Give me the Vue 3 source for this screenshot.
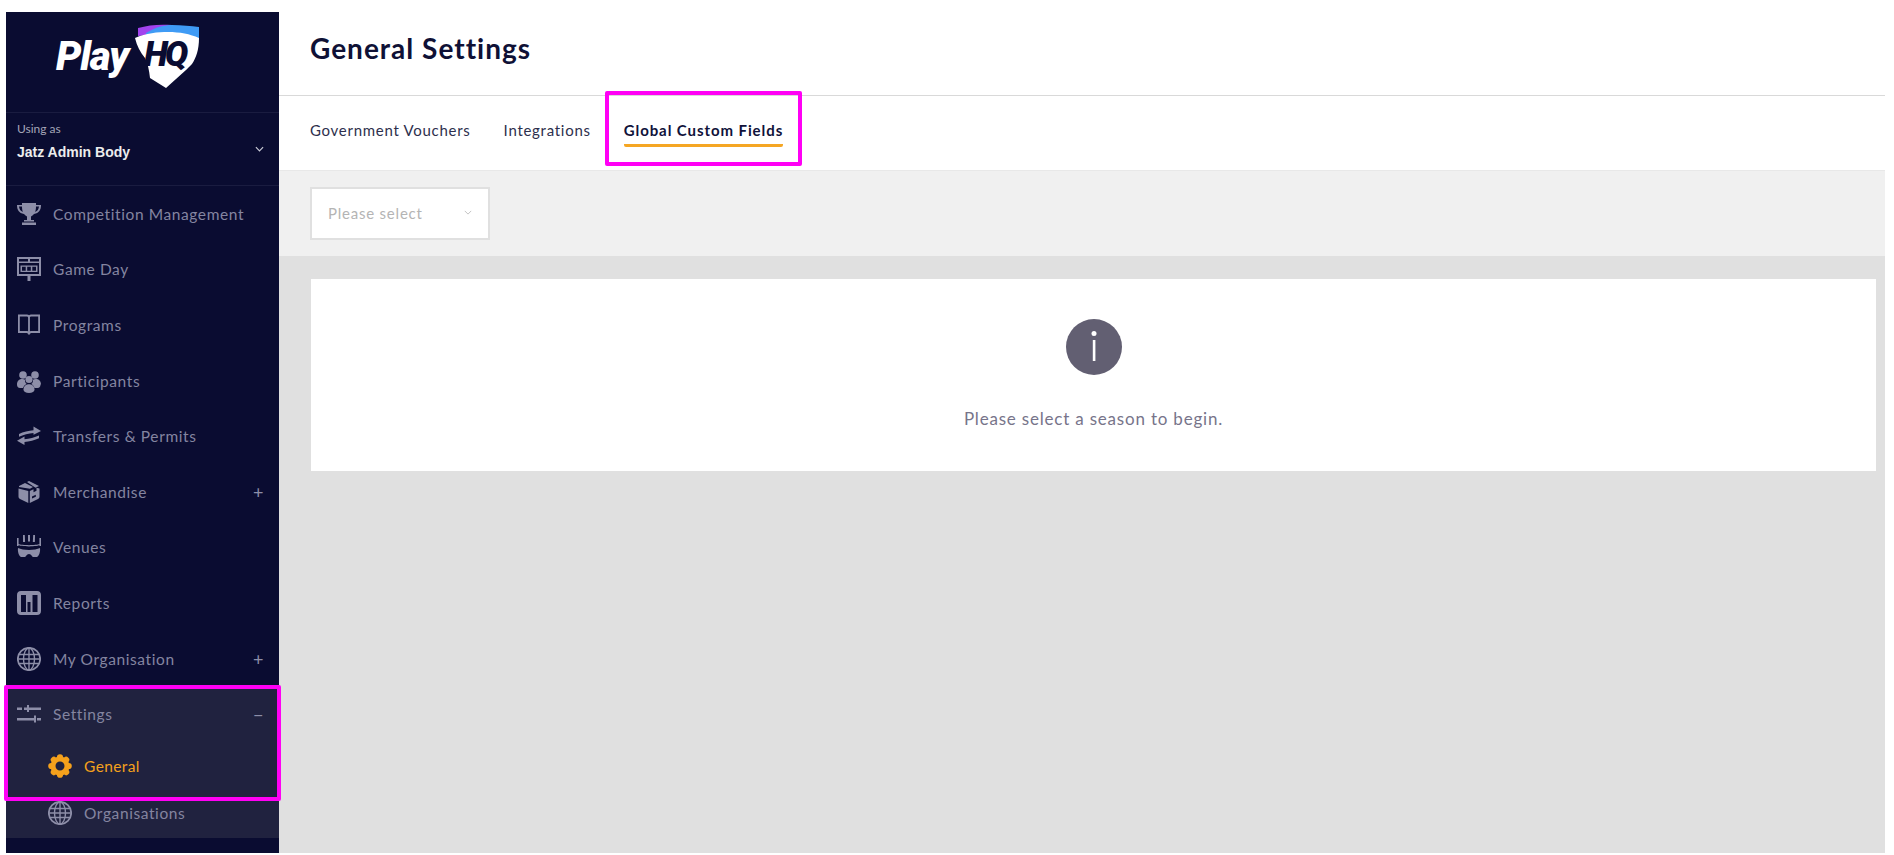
<script setup>
const items = [
  { label: 'Competition Management', icon: 'trophy' },
  { label: 'Game Day', icon: 'board' },
  { label: 'Programs', icon: 'book' },
  { label: 'Participants', icon: 'people' },
  { label: 'Transfers & Permits', icon: 'arrows' },
  { label: 'Merchandise', icon: 'box', mark: '+' },
  { label: 'Venues', icon: 'venue' },
  { label: 'Reports', icon: 'report' },
  { label: 'My Organisation', icon: 'globe', mark: '+' },
]
const tabs = [
  { label: 'Government Vouchers' },
  { label: 'Integrations' },
  { label: 'Global Custom Fields', active: true },
]
const teeth = [0, 45, 90, 135, 180, 225, 270, 315]
</script>

<template>
  <div class="page">
    <aside class="sidebar">
      <div class="logo">
        <span class="play">Play</span>
        <span class="shield">
          <svg class="shield-svg" viewBox="0 0 66 66" width="66" height="66">
            <path d="M4 4 C14 1 26 0 38 1 L38 9 L4 12 Z" fill="#a243ee" />
            <path d="M12 9 C22 3 30 1 38 1 C48 1 57 2 65 3 L65 16 C50 9 28 8 12 12 Z" fill="#3f9bf5" />
            <path d="M1 14 C12 9 24 8 34 8 C46 8 56 10 65 14 C65 26 62 34 58 40 L52 46 L32 64 L16 54 C15 46 14 40 11 34 C6 28 3 22 1 14 Z" fill="#fff" />
          </svg>
          <span class="hq">HQ</span>
        </span>
      </div>

      <div class="user">
        <div>
          <div class="using">Using as</div>
          <div class="org">Jatz Admin Body</div>
        </div>
        <svg class="chev" viewBox="0 0 10 6" width="9" height="6"><path d="M1 1l4 4 4-4" fill="none" stroke="#c9cad6" stroke-width="1.3" /></svg>
      </div>

      <nav class="nav">
        <a v-for="it in items" :key="it.label" class="row">
          <svg class="ic" viewBox="0 0 24 24" width="24" height="24" fill="#8d8ea8">
            <template v-if="it.icon === 'trophy'">
              <path d="M5 1h14v2h5c0 5-2 8-7 9-1 1-2 2-3 2.500V18h3v1.500H7V18h3v-3.500C9 14 8 13 7 12 2 11 0 8 0 3h5zM2 4.500c.3 2.700 1.500 4.500 3.800 5.500C5.300 8.500 5 6.500 5 4.500zm17 0c0 2-.3 4-.8 5.500 2.300-1 3.500-2.800 3.800-5.500z" />
              <rect x="5" y="20.500" width="14" height="2.500" />
            </template>
            <template v-else-if="it.icon === 'board'">
              <path fill-rule="evenodd" d="M0 0h24v19H0zM2 2v2.500h9V2zm11 0v2.500h9V2zM2 6v11h20V6z" />
              <path fill-rule="evenodd" d="M3.500 8.500h17v6.500h-17zm1.500 1.300v3.900h3.700V9.800zm5.200 0v3.900h3.600V9.800zm5.100 0v3.900H19V9.800z" />
              <rect x="10.500" y="19" width="3" height="5" />
            </template>
            <template v-else-if="it.icon === 'book'">
              <path fill="none" stroke="#8d8ea8" stroke-width="1.800" d="M1.900 2.500h8c1.400 0 2.100.8 2.100 2.200 0-1.400.7-2.200 2.100-2.200h8v16.500h-8c-1.400 0-2.100.6-2.100 2.500 0-1.900-.7-2.500-2.100-2.500h-8zM12 4.700V21.500" />
            </template>
            <template v-else-if="it.icon === 'people'">
              <circle cx="6" cy="6" r="3.800" /><circle cx="18" cy="6" r="3.800" />
              <path d="M0 15.500c0-3.500 2-5.500 5.500-5.500 1 0 1.800.2 2.500.7-.2 2 .5 3.500 1.800 4.300C7.500 16 6.500 17.500 6 19H3c-2 0-3-1.500-3-3.500zM24 15.500c0-3.500-2-5.500-5.500-5.500-1 0-1.800.2-2.500.7.2 2-.5 3.500-1.800 4.300 1.800 1 2.800 2.500 3.300 4h3c2 0 3-1.500 3-3.500z" />
              <circle cx="12" cy="10.500" r="3.600" />
              <path d="M6.500 20.500c0-3.200 2.200-5.300 5.500-5.300s5.500 2.100 5.500 5.300c0 2-2.200 3.500-5.500 3.500s-5.500-1.500-5.500-3.500z" />
            </template>
            <template v-else-if="it.icon === 'arrows'">
              <path d="M2 10 C6 8 12 6.800 16.500 6.300 V2.500 L24 7 L16.500 10.800 V9 C12 9.400 6 10.800 2 12.800Z" />
              <path d="M22 11.500 C18 13.500 12 14.800 7.500 15.300 V12.500 L0 16.800 L7.500 21 V18 C12 17.500 18 16.200 22 14.200Z" />
            </template>
            <template v-else-if="it.icon === 'box'">
              <path d="M2 6 8 3l8 4-3 1.700L2 7zM10 2l2-1 10 5-3.500 1.800zM1.500 8.500l9.800 2.500V23L3 19c-1-.5-1.500-1.200-1.500-2.500zM22.500 8.500v8c0 1.300-.5 2-1.500 2.500l-8.200 4V11l3.700-1.800v3l3-1.500v-3z" />
              <path d="M15 16.500l3.800-1.800v2L15 18.500z" fill="#0a0c31" />
            </template>
            <template v-else-if="it.icon === 'venue'">
              <path d="M0 3h1.600v8H0zM22.400 3H24v8h-1.600zM6 0h1.800l.3 7H6zM11 0h2v6.500h-2zM16.200 0H18l-.1 7h-2.100z" />
              <path d="M1.500 9c3 1.500 18 1.500 21 0l1 .5C21 12 3 12 .5 9.500z" />
              <path d="M1 13c5 2.500 17 2.500 22 0 .5 4-1 8-3 9h-4c-1 0-1.500-3-4-3s-3 3-4 3H4c-2-1-3.500-5-3-9z" />
            </template>
            <template v-else-if="it.icon === 'report'">
              <path fill-rule="evenodd" d="M4 0h16c2.500 0 4 1.500 4 4v16c0 2.500-1.500 4-4 4H4c-2.500 0-4-1.500-4-4V4c0-2.500 1.500-4 4-4zm0 4v17h5V4zm6.500 7v10h3V11zm5 -7v17h5V4z" />
            </template>
            <template v-else-if="it.icon === 'globe'">
              <g fill="none" stroke="#8d8ea8" stroke-width="1.400">
                <circle cx="12" cy="12" r="11.200" stroke-width="1.700" />
                <ellipse cx="12" cy="12" rx="5.500" ry="11" />
                <path d="M12 1v22M2 7.500h20M1 12h22M2 16.500h20" />
              </g>
            </template>
          </svg>
          <span class="label">{{ it.label }}</span>
          <span v-if="it.mark" class="mark">{{ it.mark }}</span>
        </a>

        <div class="group">
          <a class="row">
            <svg class="ic" viewBox="0 0 24 24" width="24" height="24" fill="#8d8ea8">
              <rect x="0" y="5.500" width="5" height="2.500" /><rect x="7" y="5.500" width="17" height="2.500" /><rect x="10" y="3" width="2" height="7" />
              <rect x="0" y="16" width="17" height="2.500" /><rect x="20" y="16" width="4" height="2.500" /><rect x="17" y="13.500" width="2" height="7" />
            </svg>
            <span class="label">Settings</span>
            <span class="mark">−</span>
          </a>
          <a class="sub active">
            <svg class="ic" viewBox="0 0 24 24" width="24" height="24" fill="#f5a11c">
              <circle v-for="a in teeth" :key="a" cx="12" cy="3.300" r="3.100" :transform="`rotate(${a} 12 12)`" />
              <circle cx="12" cy="12" r="7" fill="none" stroke="#f5a11c" stroke-width="5" />
            </svg>
            <span class="label">General</span>
          </a>
          <a class="sub">
            <svg class="ic" viewBox="0 0 24 24" width="24" height="24">
              <g fill="none" stroke="#8d8ea8" stroke-width="1.400">
                <circle cx="12" cy="12" r="11.200" stroke-width="1.700" />
                <ellipse cx="12" cy="12" rx="5.500" ry="11" />
                <path d="M12 1v22M2 7.500h20M1 12h22M2 16.500h20" />
              </g>
            </svg>
            <span class="label">Organisations</span>
          </a>
        </div>
      </nav>
      <div class="hl hl-side"></div>
    </aside>

    <main class="main">
      <header class="head"><h1>General Settings</h1></header>
      <div class="tabs">
        <a v-for="t in tabs" :key="t.label" class="tab" :class="{ on: t.active }">{{ t.label }}</a>
        <div class="hl hl-tab"></div>
      </div>
      <div class="toolbar">
        <div class="select">
          <span>Please select</span>
          <svg viewBox="0 0 10 6" width="8" height="5"><path d="M1 1l4 4 4-4" fill="none" stroke="#b5b5b5" stroke-width="1" /></svg>
        </div>
      </div>
      <div class="body">
        <section class="card">
          <svg viewBox="0 0 56 56" width="56" height="56">
            <circle cx="28" cy="28" r="28" fill="#625f72" />
            <circle cx="28" cy="14.500" r="2.500" fill="#fff" />
            <rect x="26.800" y="21" width="2.600" height="21" fill="#fff" />
          </svg>
          <p>Please select a season to begin.</p>
        </section>
      </div>
    </main>
  </div>
</template>

<style scoped>
.page {
  box-sizing: border-box;
  height: 855px;
  padding: 12px 9px 2px 6px;
  display: flex;
  background: #fff;
  font-family: Lato, "Open Sans", sans-serif;
  overflow: hidden;
}
.sidebar {
  position: relative;
  width: 273px;
  flex: none;
  background: #0a0c31;
  display: flex;
  flex-direction: column;
}
.logo {
  height: 101px;
  box-sizing: border-box;
  border-bottom: 1px solid #1a1c40;
  position: relative;
}
.play {
  position: absolute;
  left: 50px;
  top: 20px;
  font: italic 900 40px/50px Roboto, sans-serif;
  letter-spacing: -1px;
  color: #fff;
}
.shield {
  position: absolute;
  left: 128px;
  top: 12px;
  width: 66px;
  height: 66px;
}
.shield-svg {
  display: block;
}
.hq {
  position: absolute;
  left: 10px;
  top: 11px;
  font: italic 900 35px/40px Roboto, sans-serif;
  letter-spacing: -3px;
  color: #0a0c31;
}
.user {
  height: 73px;
  box-sizing: border-box;
  padding: 0 15px 0 11px;
  border-bottom: 1px solid #1a1c40;
  display: flex;
  align-items: center;
  justify-content: space-between;
}
.user > div {
  margin-top: -16px;
}
.using {
  font-size: 12px;
  line-height: 16px;
  color: #a5a6b8;
  margin-bottom: 6px;
}
.org {
  font-family: "Liberation Sans", sans-serif;
  font-size: 14px;
  font-weight: 700;
  line-height: 18px;
  color: #eceded;
}
.chev {
  margin-top: -1px;
}
.nav {
  flex: 1;
  display: flex;
  flex-direction: column;
}
.row,
.sub {
  display: flex;
  align-items: center;
  font-size: 15.500px;
  letter-spacing: 0.6px;
  color: #8485a0;
}
.row {
  height: 55.600px;
  padding: 0 15px 0 11px;
  flex: none;
}
.ic {
  flex: none;
  margin-right: 12px;
}
.label {
  flex: 1;
  white-space: nowrap;
}
.mark {
  font-size: 18px;
  color: #8d8ea8;
}
.group {
  background: #20223f;
  padding-bottom: 1px;
}
.sub {
  height: 47px;
  padding-left: 42px;
}
.sub.active {
  color: #f5a11c;
  letter-spacing: 0.4px;
  margin-top: 1px;
}
.hl {
  position: absolute;
  box-sizing: border-box;
  border: 4px solid #ff00f5;
  border-radius: 2px;
  pointer-events: none;
}
.hl-side {
  left: -2px;
  top: 673px;
  width: 277px;
  height: 116px;
}
.main {
  flex: 1;
  min-width: 0;
  display: flex;
  flex-direction: column;
}
.head {
  height: 84px;
  flex: none;
  box-sizing: border-box;
  border-bottom: 1px solid #d9d9d9;
  padding: 0 31px 12px;
  display: flex;
  align-items: center;
}
h1 {
  margin: 0;
  font-size: 28px;
  font-weight: 700;
  letter-spacing: 1px;
  color: #0f1136;
}
.tabs {
  position: relative;
  height: 74px;
  flex: none;
  box-sizing: border-box;
  padding: 0 31px;
  display: flex;
  gap: 33px;
  align-items: flex-start;
}
.tab {
  margin-top: 24px;
  padding-bottom: 4px;
  font-size: 15px;
  line-height: 20px;
  letter-spacing: 0.72px;
  color: #2d2f4d;
  border-bottom: 3px solid transparent;
  white-space: nowrap;
}
.tab.on {
  font-weight: 700;
  letter-spacing: 0.92px;
  color: #10123a;
  border-bottom-color: #f5a623;
  border-radius: 0 0 2px 2px;
}
.hl-tab {
  left: 326px;
  top: -5px;
  width: 197px;
  height: 75px;
}
.toolbar {
  height: 86px;
  flex: none;
  box-sizing: border-box;
  background: #f0f0f0;
  border-top: 1px solid #e8e8e8;
  padding: 16px 31px;
  display: flex;
  align-items: flex-start;
}
.select {
  width: 180px;
  height: 53px;
  box-sizing: border-box;
  background: #fff;
  border: 2px solid #e0e0e0;
  padding: 0 16px 2px 16px;
  display: flex;
  align-items: center;
  justify-content: space-between;
  font-size: 15px;
  letter-spacing: 0.78px;
  color: #b4b4b4;
}
.body {
  flex: 1;
  background: #e0e0e0;
  padding: 23px 9px 0 32px;
}
.card {
  height: 192px;
  box-sizing: border-box;
  background: #fff;
  padding-top: 40px;
  display: flex;
  flex-direction: column;
  align-items: center;
}
.card svg {
  display: block;
}
.card p {
  margin: 34px 0 0;
  font-size: 17px;
  line-height: 20px;
  letter-spacing: 0.8px;
  color: #77748a;
}
</style>
